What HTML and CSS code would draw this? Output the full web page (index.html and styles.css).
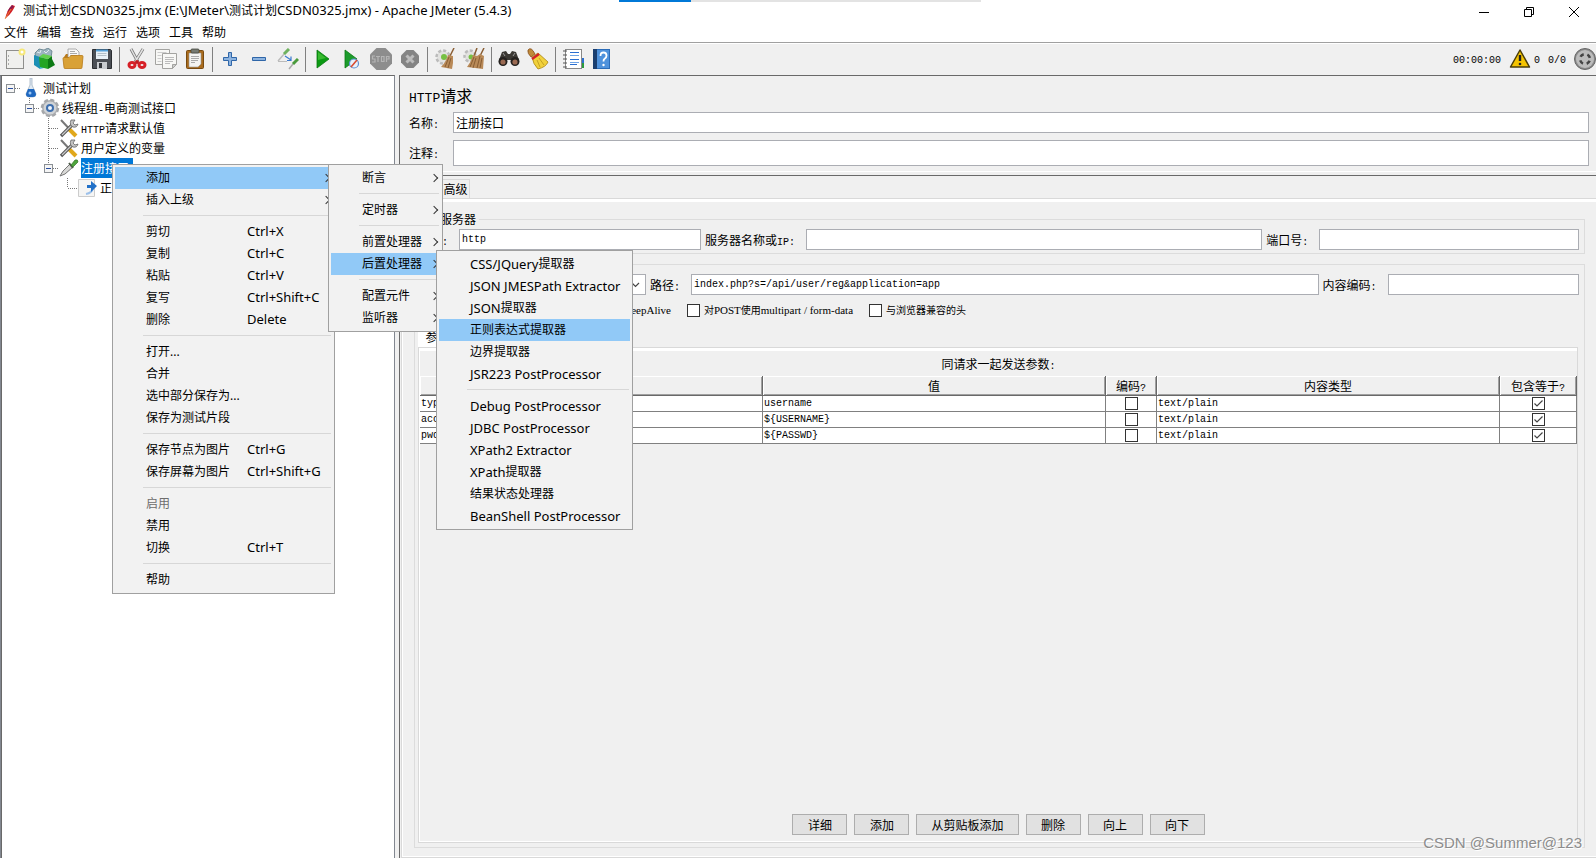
FILE: index.html
```html
<!DOCTYPE html>
<html lang="zh-CN">
<head>
<meta charset="utf-8">
<title>测试计划CSDN0325.jmx - Apache JMeter (5.4.3)</title>
<link rel="stylesheet" href="styles.css">
</head>
<body>
<div class="loader"><span class="loader-bar"></span></div>
<header class="titlebar">
  <svg class="app-icon" viewBox="0 0 16 16"><path d="M3 15 Q5 6 10 1 L13 2 Q10 9 5 13Z" fill="#d22128"/><path d="M5 8 Q7 4 10 1 L12 3 Q9 5 5 8Z" fill="#8a1a4f"/><path d="M3 15 L9 5" stroke="#f0a03a" stroke-width=".7"/></svg>
  <h1 class="title">测试计划<span class="lat">CSDN0325.jmx (E:\JMeter\</span>测试计划<span class="lat">CSDN0325.jmx) - Apache JMeter (5.4.3)</span></h1>
  <div class="window-buttons">
    <button aria-label="最小化"><svg viewBox="0 0 12 12"><path d="M1 6.5h10" stroke="#000"/></svg></button>
    <button aria-label="还原"><svg viewBox="0 0 12 12" fill="none" stroke="#000"><path d="M1.500 3.500h7v7h-7zM3.500 3.500v-2h7v7h-2"/></svg></button>
    <button aria-label="关闭"><svg viewBox="0 0 12 12"><path d="M1 1l10 10M11 1L1 11" stroke="#000"/></svg></button>
  </div>
</header>
<nav class="menubar">
  <button>文件</button><button>编辑</button><button>查找</button><button>运行</button><button>选项</button><button>工具</button><button>帮助</button>
</nav>
<div class="toolbar">
  <button aria-label="新建"><svg viewBox="0 0 22 22"><rect x="2.500" y="2.500" width="17" height="18" fill="#f0f0ee" stroke="#8f8f8d"/><path d="M4.500 7v2M4.500 11v2M4.500 15v2" stroke="#aaa"/><circle cx="18" cy="4" r="3.500" fill="#f6e87a"/><circle cx="18" cy="4" r="1.500" fill="#fff"/></svg></button>
  <button aria-label="模板"><svg viewBox="0 0 22 22"><path d="M2 5l4-4 5 1 4-2 4 3-1 7H3z" fill="#9cb4bf" stroke="#5f7b88" stroke-width=".8"/><path d="M4 4l3 1 1-3M11 3l2 2 3-3" stroke="#dfeaf0" fill="none"/><path d="M1 7l6 2v12l-6-4z" fill="#1c8fb5"/><path d="M7 9l4-2v13l-4 1z" fill="#3fb6d8"/><path d="M6 9l9 2v10l-8-2z" fill="#23a523"/><path d="M15 11l4-3v3l3 6-7 4z" fill="#0c7a14"/><path d="M6 9l4-3 9 2-4 3z" fill="#63d04b"/></svg></button>
  <button aria-label="打开"><svg viewBox="0 0 22 22"><path d="M2 9l2-3h3l1 2h10v5H2z" fill="#b9791a"/><path d="M6 10V1h8l3 3v7z" fill="#f8f8f8" stroke="#999" stroke-width=".8"/><path d="M8 3.500h5M8 5.500h7M8 7.500h7" stroke="#aaa"/><path d="M1 10.500q0-1 1-1h5l2-2h11q1 0 1 1l-1 11q0 1-1 1H3q-1 0-1-1z" fill="#d9a136" stroke="#b87a16" stroke-width=".8"/></svg></button>
  <button aria-label="保存"><svg viewBox="0 0 22 22"><path d="M1.500 1.500h18l1 1v18h-19z" fill="#4b4f55" stroke="#2b2d31"/><rect x="5" y="2" width="12" height="9" fill="#e9f1f7"/><path d="M5 2.500h12" stroke="#54a0d8" stroke-width="2"/><path d="M6.500 5.500h9M6.500 7.500h9" stroke="#b4c0c8"/><rect x="6" y="14" width="10" height="7" fill="#c9ccd0"/><rect x="8" y="15" width="3" height="5" fill="#33363b"/></svg></button>
  <span class="sep"></span>
  <button aria-label="剪切"><svg viewBox="0 0 22 22"><path d="M5 1l7 13M17 1L9 14" stroke="#777" stroke-width="3"/><path d="M5 1l7 13M17 1L9 14" stroke="#e2e2e2" stroke-width="1.500"/><ellipse cx="6" cy="17" rx="3" ry="2.500" fill="none" stroke="#d61f26" stroke-width="3"/><ellipse cx="16" cy="17" rx="3" ry="2.500" fill="none" stroke="#d61f26" stroke-width="3"/><circle cx="11" cy="14" r="2" fill="#c21920"/></svg></button>
  <button aria-label="复制"><svg viewBox="0 0 22 22" fill="#f7f7f5" stroke="#a3a3a0"><path d="M.500 1.500h14v15h-14z"/><path d="M2.500 4.500h9M2.500 7.500h4M2.500 10.500h4M2.500 13.500h4" stroke="#ccc"/><path d="M7.500 5.500h14v11l-4 4h-10z"/><path d="M10 9.500h9M10 11.500h9M10 13.500h8M10 15.500h5" stroke="#bbb"/><path d="M21.500 16.500h-4v4z" fill="#ccc"/></svg></button>
  <button aria-label="粘贴"><svg viewBox="0 0 22 22"><rect x="2.500" y="2.500" width="17" height="18" rx="1" fill="#a96b1d" stroke="#784a10"/><path d="M5 5h12v11l-3 3H5z" fill="#f4f4f2" stroke="#999" stroke-width=".6"/><rect x="7" y="1" width="8" height="4" rx="1" fill="#777b72" stroke="#44483f" stroke-width=".8"/><path d="M7 8.500h8M7 10.500h8M7 12.500h7M7 14.500h4" stroke="#aaa"/></svg></button>
  <span class="sep"></span>
  <button aria-label="展开"><svg viewBox="0 0 22 22"><path d="M9.500 4.500h3v5h5v3h-5v5h-3v-5h-5v-3h5z" fill="#8cb3df" stroke="#2f66a8"/></svg></button>
  <button aria-label="折叠"><svg viewBox="0 0 22 22"><path d="M4.500 9.500h13v3h-13z" fill="#8cb3df" stroke="#2f66a8"/></svg></button>
  <button aria-label="切换"><svg viewBox="0 0 22 22"><path d="M1 13l7-8" stroke="#bbb" stroke-width="1.500"/><path d="M7 6l5-5" stroke="#6fb25f" stroke-width="3"/><path d="M12 21l4-5" stroke="#aaa" stroke-width="1.500"/><path d="M16 16l5-5" stroke="#4a9a3c" stroke-width="3"/><path d="M1 13.500h9" stroke="#bbb"/><path d="M8 8l6 4M14 8.500v4h-4" stroke="#3a7ad0" fill="none" stroke-width="1.200"/></svg></button>
  <span class="sep"></span>
  <button aria-label="启动"><svg viewBox="0 0 22 22"><path d="M5 2l12 9-12 9z" fill="#0b9a13" stroke="#0a7a10" stroke-width=".8"/><path d="M6 4l8 6-8 2z" fill="#58d044" opacity=".6"/></svg></button>
  <button aria-label="不停顿启动"><svg viewBox="0 0 22 22"><path d="M4 2l12 9-12 9z" fill="#1c9b2c" stroke="#0a7a10" stroke-width=".8"/><circle cx="13" cy="15.500" r="4.500" fill="#e8f1fb" stroke="#5d8fd0" stroke-width="1.200"/><path d="M10 19l6-7" stroke="#d84a30" stroke-width="1.600"/></svg></button>
  <button aria-label="停止" disabled><svg viewBox="0 0 22 22"><path d="M6.500 0h9L22 6.500v9L15.500 22h-9L0 15.500v-9z" fill="#8d8d8d"/><path d="M5 8H2.500v3H5v3H2M6 8.500h4M8 8v6M11.500 8.500h2.500v5h-2.500zM16.500 14V8.500H19V11h-2" fill="none" stroke="#b5b5b5" stroke-width="1.200"/></svg></button>
  <button aria-label="关闭测试" disabled><svg viewBox="0 0 22 22"><path d="M7.500 2h7L20 7.500v7L14.500 20h-7L2 14.500v-7z" fill="#848484"/><path d="M7.500 7.500l7 7M14.500 7.500l-7 7" stroke="#bcbcbc" stroke-width="3"/></svg></button>
  <span class="sep"></span>
  <button aria-label="清除"><svg viewBox="0 0 22 22"><circle cx="9" cy="9" r="6.500" fill="#e2e2e0" stroke="#bbb" stroke-width="2.500" stroke-dasharray="3 2"/><circle cx="10" cy="9" r="3" fill="#76c043"/><path d="M20 0l-4 8" stroke="#8a5f35" stroke-width="1.500"/><path d="M14 7l5 1v7l-1 6-11-2q5-5 7-12z" fill="#b98a58"/><path d="M15 9l-4 10M17 10l-3 10" stroke="#7b5128" stroke-width=".8"/></svg></button>
  <button aria-label="清除全部"><svg viewBox="0 0 22 22"><circle cx="7" cy="8" r="5.500" fill="#e2e2e0" stroke="#bbb" stroke-width="2.500" stroke-dasharray="3 2"/><circle cx="8" cy="9" r="2.500" fill="#76c043"/><path d="M14 0l-3 8M21 0l-4 8" stroke="#8a5f35" stroke-width="1.500"/><path d="M10 7l4 1 3-2 4 2-1 13-16-2q4-5 6-12z" fill="#b98a58"/><path d="M11 9l-4 10M13 10l-3 10M17 8l-3 12M19 10l-2 10" stroke="#7b5128" stroke-width=".8"/></svg></button>
  <span class="sep"></span>
  <button aria-label="查找"><svg viewBox="0 0 22 22"><path d="M4 4l4-1 2 3h2l2-3 4 1 3 8H1z" fill="#3b3833"/><circle cx="5" cy="13.500" r="4.500" fill="#24211e"/><circle cx="17" cy="13.500" r="4.500" fill="#24211e"/><circle cx="5" cy="14" r="2.600" fill="#9b6a52"/><circle cx="17" cy="14" r="2.600" fill="#9b6a52"/><path d="M5 5l2 3M17 5l-2 3" stroke="#999"/></svg></button>
  <button aria-label="重置搜索"><svg viewBox="0 0 22 22"><path d="M1 2q3-4 7 4l-4 3Q0 5 1 2z" fill="#c08a3a" stroke="#7b4313" stroke-width=".7"/><path d="M5 9l6-4 10 9q-2 5-10 7-5-5-6-12z" fill="#f1d13c" stroke="#a98412" stroke-width=".8"/><path d="M5 11l7-5" stroke="#d2232a" stroke-width="2.500"/><path d="M10 12l3 7M12 10l5 7" stroke="#b9951c" stroke-width=".8"/></svg></button>
  <span class="sep"></span>
  <button aria-label="函数助手"><svg viewBox="0 0 22 22"><rect x="3.500" y="1.500" width="16" height="19" fill="#fff" stroke="#888"/><path d="M1 3h4M1 7h4M1 11h4M1 15h4M1 19h4" stroke="#555" stroke-width="1.200"/><path d="M8 4.500h9M8 11.500h9M8 16.500h7" stroke="#2b6fd0"/><path d="M8 7.500h9M8 14.500h9" stroke="#6fa4e6"/><path d="M20 10h2v5h-2z" fill="#2b6fd0"/><path d="M20 15h2v5h-2z" fill="#2c9a3c"/></svg></button>
  <button aria-label="帮助"><svg viewBox="0 0 22 22"><rect x="2" y="1" width="17" height="20" fill="#2b6cb8"/><rect x="2" y="1" width="4" height="20" fill="#1b3f70"/><rect x="6" y="2" width="12" height="18" fill="#4f92dc"/><path d="M9.500 8q0-3.500 3-3.500t3 3q0 2-1.600 3T12.500 13.500" fill="none" stroke="#fff" stroke-width="1.800"/><circle cx="12.500" cy="17" r="1.200" fill="#fff"/></svg></button>
  <div class="status">
    <span class="clock">00:00:00</span>
    <button class="warn" aria-label="日志"><svg viewBox="0 0 22 22"><path d="M11 2l9.500 17h-19z" fill="#f5c400" stroke="#4a3d08" stroke-width="1.500" stroke-linejoin="round"/><path d="M11 7v6" stroke="#222" stroke-width="2.400"/><circle cx="11" cy="16" r="1.300" fill="#222"/></svg></button>
    <span>0</span><span class="threads">0/0</span>
    <svg class="engine" viewBox="0 0 22 22"><circle cx="11" cy="11" r="10.500" fill="#8b8b8b" stroke="#666"/><circle cx="11" cy="11" r="9" fill="#bcbcbc"/><circle cx="11" cy="11" r="5" fill="none" stroke="#444" stroke-width="2.500" stroke-dasharray="4 3.850" stroke-dashoffset="-1.900"/></svg>
  </div>
</div>

<main class="workspace">
  <aside class="tree">
    <div class="node"><svg class="cell" viewBox="0 0 19 20"><use href="#knob"/></svg>
      <svg class="icon" viewBox="0 0 22 20"><path d="M10 0h2v7l4 9q0 3-3 3H9q-3 0-3-3l4-9z" fill="#dfe9f2" stroke="#9ab" stroke-width=".7"/><path d="M8 11h6l2 5q0 3-3 3H9q-3 0-3-3z" fill="#1f68c0"/><circle cx="10" cy="15" r="1.500" fill="#9cc8f5"/></svg><span class="name">测试计划</span></div>
    <div class="node"><span class="cell"></span><svg class="cell" viewBox="0 0 19 20"><path class="dots" d="M9.500 0v6"/><use href="#knob"/></svg>
      <svg class="icon" viewBox="0 0 22 20"><circle cx="11" cy="10" r="8" fill="#bfc1c4" stroke="#a5a7aa" stroke-width="2.500" stroke-dasharray="4 2.280"/><circle cx="11" cy="10" r="7" fill="#d0d3d6" stroke="#a0a2a5" stroke-width=".8"/><circle cx="11" cy="10" r="4" fill="#3e6fae"/><circle cx="11" cy="10" r="2" fill="#eef3f8"/></svg><span class="name">线程组<span class="en">-</span>电商测试接口</span></div>
    <div class="node"><span class="cell"></span><span class="cell"></span><svg class="cell" viewBox="0 0 19 20"><path class="dots" d="M9.500 0v20M10 10.500h9"/></svg>
      <svg class="icon" viewBox="0 0 22 20"><use href="#tools"/></svg><span class="name"><span class="en">HTTP</span>请求默认值</span></div>
    <div class="node"><span class="cell"></span><span class="cell"></span><svg class="cell" viewBox="0 0 19 20"><path class="dots" d="M9.500 0v20M10 10.500h9"/></svg>
      <svg class="icon" viewBox="0 0 22 20"><use href="#tools"/></svg><span class="name">用户定义的变量</span></div>
    <div class="node"><span class="cell"></span><span class="cell"></span><svg class="cell" viewBox="0 0 19 20"><path class="dots" d="M9.500 0v6"/><use href="#knob"/></svg>
      <svg class="icon" viewBox="0 0 22 20"><path d="M2 18l3-5 7-7 3 3-8 7z" fill="#d8d8d6" stroke="#777" stroke-width="1"/><path d="M11 5l4 5" stroke="#4c5a48" stroke-width="2"/><path d="M13 7l4-5q3-1 3 2l-5 5z" fill="#4fa53c" stroke="#35762a" stroke-width=".7"/></svg><span class="name selected">注册接口</span></div>
    <div class="node"><span class="cell"></span><span class="cell"></span><span class="cell"></span><svg class="cell" viewBox="0 0 19 20"><path class="dots" d="M9.500 0v10M10 10.500h9"/></svg>
      <svg class="icon" viewBox="0 0 22 20"><path d="M1.500 1.500h16v17h-16z" fill="#f5f5f4" stroke="#ccc"/><path d="M9 16q6-1 7-6" stroke="#9cc0ea" stroke-width="2" fill="none"/><path d="M10 7h4V3l6 5-6 6v-4h-4z" fill="#2271c8"/></svg><span class="name">正则表达式提取器</span></div>
    <svg class="defs" width="0" height="0"><defs>
      <g id="knob"><path class="dots" d="M14 10.500h5"/><rect x="5.500" y="6.500" width="8" height="8" fill="#f5f5f5" stroke="#8a8f94"/><path d="M7 10.500h5" stroke="#2a4fa0"/></g>
      <g id="tools"><path d="M3 2l14 15" stroke="#777" stroke-width="2"/><path d="M11 11l7 7" stroke="#e0a81c" stroke-width="4"/><path d="M3 18L14 7" stroke="#555" stroke-width="3.200"/><path d="M4 17L14 7" stroke="#c9c9c9" stroke-width="1.200"/><path d="M13 2q-2 5 2 7 4 1 5-3l-3 1-2-2 2-3z" fill="#c4c4c4" stroke="#666" stroke-width=".8"/></g>
    </defs></svg>
  </aside>
  <div class="splitter"></div>
  <section class="editor">
    <div class="head">
      <h2><span class="en">HTTP</span>请求</h2>
      <div class="row"><label class="lead" for="f-name">名称<span class="en">:</span></label><input class="field cjk" id="f-name" value="注册接口"></div>
      <div class="row"><label class="lead" for="f-note">注释<span class="en">:</span></label><input class="field tall" id="f-note"></div>
    </div>
    <div class="tabs"><button class="tab on">基本</button><button class="tab">高级</button></div>
    <div class="panel">
      <fieldset class="group">
        <legend><span class="en">Web</span>服务器</legend>
        <div class="row server">
          <label for="f-proto">协议<span class="en">:</span></label><input class="field" id="f-proto" value="http">
          <label for="f-host">服务器名称或<span class="en">IP:</span></label><input class="field" id="f-host">
          <label for="f-port">端口号<span class="en">:</span></label><input class="field" id="f-port">
        </div>
      </fieldset>
      <fieldset class="group fill">
        <legend><span class="en">HTTP</span>请求</legend>
        <div class="row request">
          <select class="field" aria-label="方法"><option>POST</option></select>
          <label for="f-path">路径<span class="en">:</span></label><input class="field" id="f-path" value="index.php?s=/api/user/reg&amp;application=app">
          <label for="f-enc">内容编码<span class="en">:</span></label><input class="field" id="f-enc">
        </div>
        <div class="checks">
          <label><input type="checkbox">自动重定向</label>
          <label><input type="checkbox" checked>跟随重定向</label>
          <label><input type="checkbox" checked><span>使用 <span class="serif">KeepAlive</span></span></label>
          <label><input type="checkbox"><span>对<span class="serif">POST</span>使用<span class="serif">multipart / form-data</span></span></label>
          <label><input type="checkbox">与浏览器兼容的头</label>
        </div>
        <div class="tabs inner"><button class="tab on">参数</button></div>
        <div class="params">
          <h3>同请求一起发送参数<span class="en">:</span></h3>
          <table>
            <colgroup><col><col><col class="c-enc"><col><col class="c-eq"></colgroup>
            <thead><tr><th>名称<span class="en">:</span></th><th>值</th><th>编码<span class="en">?</span></th><th>内容类型</th><th>包含等于<span class="en">?</span></th></tr></thead>
            <tbody>
              <tr><td>type</td><td>username</td><td class="mid"><input type="checkbox" aria-label="编码"></td><td>text/plain</td><td class="mid"><input type="checkbox" checked aria-label="包含等于"></td></tr>
              <tr><td>account</td><td>${USERNAME}</td><td class="mid"><input type="checkbox" aria-label="编码"></td><td>text/plain</td><td class="mid"><input type="checkbox" checked aria-label="包含等于"></td></tr>
              <tr><td>pwd</td><td>${PASSWD}</td><td class="mid"><input type="checkbox" aria-label="编码"></td><td>text/plain</td><td class="mid"><input type="checkbox" checked aria-label="包含等于"></td></tr>
            </tbody>
          </table>
          <div class="actions"><button>详细</button><button>添加</button><button>从剪贴板添加</button><button>删除</button><button>向上</button><button>向下</button></div>
        </div>
      </fieldset>
    </div>
  </section>
</main>

<div class="menu menu-node" role="menu">
  <button class="hot sub">添加</button><button class="sub">插入上级</button><hr>
  <button>剪切<kbd>Ctrl+X</kbd></button><button>复制<kbd>Ctrl+C</kbd></button><button>粘贴<kbd>Ctrl+V</kbd></button><button>复写<kbd>Ctrl+Shift+C</kbd></button><button>删除<kbd>Delete</kbd></button><hr>
  <button>打开...</button><button>合并</button><button>选中部分保存为...</button><button>保存为测试片段</button><hr>
  <button>保存节点为图片<kbd>Ctrl+G</kbd></button><button>保存屏幕为图片<kbd>Ctrl+Shift+G</kbd></button><hr>
  <button disabled>启用</button><button>禁用</button><button>切换<kbd>Ctrl+T</kbd></button><hr>
  <button>帮助</button>
</div>
<div class="menu menu-add" role="menu">
  <button class="sub">断言</button><hr><button class="sub">定时器</button><hr><button class="sub">前置处理器</button><button class="hot sub">后置处理器</button><hr><button class="sub">配置元件</button><button class="sub">监听器</button>
</div>
<div class="menu menu-post" role="menu">
  <button><span class="lat">CSS/JQuery</span>提取器</button><button><span class="lat">JSON JMESPath Extractor</span></button><button><span class="lat">JSON</span>提取器</button><button class="hot">正则表达式提取器</button><button>边界提取器</button><button><span class="lat">JSR223 PostProcessor</span></button><hr>
  <button><span class="lat">Debug PostProcessor</span></button><button><span class="lat">JDBC PostProcessor</span></button><button><span class="lat">XPath2 Extractor</span></button><button><span class="lat">XPath</span>提取器</button><button>结果状态处理器</button><button><span class="lat">BeanShell PostProcessor</span></button>
</div>
<div class="watermark">CSDN @Summer@123</div>
</body>
</html>
```
FILE: styles.css
```css
* { box-sizing: border-box; }
:root {
  --ui: "Noto Sans", "Noto Sans CJK SC", sans-serif;
  --song: "Noto Sans CJK SC", sans-serif;
  --mono: "Liberation Mono", "Noto Sans CJK SC", monospace;
}
body {
  margin: 0;
  height: 100vh;
  display: flex;
  flex-direction: column;
  overflow: hidden;
  background: #fff;
  color: #000;
  font: 12px/16px var(--ui);
}
button, input, select { font: inherit; color: inherit; margin: 0; }
button { border: 0; padding: 0; background: none; }
h1, h2, h3 { margin: 0; font-weight: 400; }

/* Title bar */
.loader {
  position: absolute;
  top: 0;
  left: 619px;
  width: 362px;
  height: 2px;
  background: #e3e3e3;
}
.loader-bar { display: block; width: 72px; height: 2px; background: #0078d7; }
.titlebar { display: flex; align-items: center; height: 24px; padding-left: 2px; }
.app-icon { width: 16px; height: 18px; margin-right: 5px; }
.title { font-size: 12px; line-height: 22px; padding-bottom: 2px; }
.lat { font-size: 13px; line-height: 1; }
.window-buttons { display: flex; margin-left: auto; height: 20px; }
.window-buttons button { width: 45px; }
.window-buttons svg { width: 12px; height: 12px; display: block; margin: auto; }
.menubar { display: flex; gap: 9px; height: 18px; padding-left: 4px; }
.menubar button { line-height: 18px; }

/* Toolbar */
.toolbar {
  display: flex;
  align-items: center;
  height: 33px;
  background: #f0f0f0;
  border-top: 1px solid #a0a0a0;
  box-shadow: inset 0 1px #fff;
}
.toolbar button { width: 29px; height: 24px; }
.toolbar svg { display: block; width: 22px; height: 22px; margin: auto; }
.sep { width: 6px; height: 25px; background: linear-gradient(#808080, #808080) 3px 0 / 1px 100% no-repeat; }
.status { display: flex; align-items: center; margin-left: auto; font: 10px/16px var(--mono); }
.status > span { padding-top: 3px; }
.status .warn { width: 22px; margin: 0 3px 0 8px; }
.threads { margin: 0 8px; }

/* Workspace */
.workspace { flex: 1; display: flex; min-height: 0; }
.tree {
  width: 395px;
  flex: none;
  padding-top: 2px;
  border: 1px solid #828790;
  border-top-color: #696969;
  border-bottom: 0;
  box-shadow: inset 1px 0 #696969;
  font-family: var(--song);
}
.splitter { width: 4px; background: #f0f0f0; }
.node { display: flex; align-items: center; height: 20px; }
.cell { width: 19px; height: 20px; flex: none; }
.icon { width: 22px; height: 20px; margin-right: 1px; }
.name { line-height: 20px; white-space: nowrap; }
.selected { background: #0078d7; color: #fff; padding-right: 4px; }
.dots { stroke: #777; stroke-dasharray: 1 1; fill: none; }
.defs { display: block; }
.en { font-family: var(--mono); font-size: 10px; line-height: 1; }

.editor {
  flex: 1;
  min-width: 0;
  display: flex;
  flex-direction: column;
  background: #f0f0f0;
  border-left: 1px solid #696969;
  border-top: 1px solid #696969;
  font-family: var(--song);
}
.head {
  display: flex;
  flex-direction: column;
  gap: 7px;
  padding: 9px 7px 9px 9px;
  border-bottom: 1px solid #696969;
  background: linear-gradient(#fff, #fff) 0 calc(100% - 3px) / 100% 1px no-repeat;
}
.head h2 { font-size: 16px; line-height: 20px; height: 20px; }
.head h2 .en { font-size: 13px; }
.row { display: flex; align-items: center; }
.row label { flex: none; white-space: nowrap; }
.row .lead { width: 44px; }
.field {
  flex: 1;
  min-width: 0;
  height: 21px;
  padding: 0 2px;
  border: 1px solid #abadb3;
  border-radius: 0;
  background: #fff;
  font: 10px/19px var(--mono);
}
.cjk { font: 12px/19px var(--song); }
.tall { height: 26px; }

.tabs { display: flex; align-items: flex-end; height: 22px; padding-left: 2px; }
.tab {
  height: 19px;
  padding: 0 1px;
  width: 29px;
  border: 1px solid #d9d9d9;
  border-bottom: 0;
  line-height: 18px;
}
.tab.on { width: 39px; height: 21px; background: #fff; }
.panel {
  flex: 1;
  min-height: 0;
  display: flex;
  flex-direction: column;
  gap: 2px;
  margin-left: 1px;
  padding: 12px 11px 9px 12px;
  border: 1px solid #d9d9d9;
  border-right: 0;
  box-shadow: inset 0 3px #fff, inset 1px -1px #fff;
}
.group {
  margin: 0;
  min-width: 0;
  padding: 2px 5px 3px 3px;
  border: 1px solid #dcdcdc;
}
.group legend { margin-left: 1px; padding: 2px 3px 0; line-height: 12px; }
.fill { flex: 1; min-height: 0; display: flex; flex-direction: column; padding-bottom: 4px; }
.server label, .request label { margin: 0 11px 0 4px; }
.server label:first-child { margin-left: 0; }
#f-proto { flex: 240; }
#f-host { flex: 458; }
#f-port { flex: 258; }
.request select { flex: 0 0 228px; }
#f-path { flex: 630; }
#f-enc { flex: 188; }
select.field {
  appearance: none;
  background: #fff url("data:image/svg+xml,%3Csvg xmlns='http://www.w3.org/2000/svg' width='9' height='6' viewBox='0 0 9 6'%3E%3Cpath d='M1 1L4.500 4.500L8 1' fill='none' stroke='%23444' stroke-width='1.200'/%3E%3C/svg%3E") right 5px center no-repeat;
}
input[type="checkbox"] {
  appearance: none;
  flex: none;
  width: 13px;
  height: 13px;
  border: 1px solid #333;
  background: #fff;
}
input[type="checkbox"]:checked {
  background: #fff url("data:image/svg+xml,%3Csvg xmlns='http://www.w3.org/2000/svg' viewBox='0 0 11 11'%3E%3Cpath d='M1.500 5.500L4 8L9.500 2.500' fill='none' stroke='%23444' stroke-width='1.200'/%3E%3C/svg%3E");
}
.checks {
  display: flex;
  gap: 16px;
  height: 20px;
  margin-top: 5px;
  font-size: 10px;
  line-height: 20px;
}
.checks label { display: flex; align-items: center; gap: 4px; white-space: nowrap; }
.serif { font-family: "Liberation Serif", serif; font-size: 11px; line-height: 1; }
.inner { margin-top: 5px; padding-left: 0; }
.inner .tab.on { padding: 0 3px; border-color: #fff; }
.params {
  flex: 1;
  min-height: 0;
  display: flex;
  flex-direction: column;
  margin-right: 1px;
  padding: 8px 0 7px 1px;
  border: 1px solid #d9d9d9;
  box-shadow: inset 0 3px #fff, inset 1px -1px #fff;
}
.params h3 { font-size: 12px; line-height: 16px; text-align: center; margin-bottom: 4px; }
table { width: 100%; table-layout: fixed; border-collapse: separate; border-spacing: 0; background: #fff; }
.c-enc { width: 51px; }
.c-eq { width: 77px; }
th {
  height: 20px;
  padding: 0;
  border-right: 1px solid #696969;
  border-bottom: 1px solid #696969;
  background: #f0f0f0;
  box-shadow: inset 1px 1px #fff, inset -1px -1px #a0a0a0;
  font-weight: 400;
  line-height: 18px;
}
td {
  height: 16px;
  padding: 0 0 0 1px;
  border-right: 1px solid #808080;
  border-bottom: 1px solid #808080;
  font: 10px/15px var(--mono);
}
.mid { padding: 0; text-align: center; }
.mid input { display: block; margin: 0 auto; }
.actions { display: flex; justify-content: center; gap: 7px; margin-top: auto; }
.actions button {
  height: 21px;
  min-width: 55px;
  padding: 0 14px;
  border: 1px solid #adadad;
  background: #e1e1e1;
  line-height: 19px;
}

/* Popup menus */
.menu {
  position: absolute;
  display: flex;
  flex-direction: column;
  padding: 2px;
  border: 1px solid #a0a0a0;
  background: #f2f2f2;
}
.menu button {
  display: flex;
  align-items: center;
  height: 22px;
  padding-left: 31px;
  line-height: 22px;
  text-align: left;
  white-space: nowrap;
}
.menu .lat { line-height: 20px; }
.menu hr { width: auto; height: 1px; margin: 4px 1px 5px 28px; border: 0; background: #d7d7d7; align-self: stretch; }
.menu .hot { background: #91c9f7; }
.menu button:disabled { color: #6d6d6d; }
.menu kbd { position: absolute; left: 134px; padding-bottom: 2px; font: 13px/20px var(--ui); }
.menu-post button { padding-bottom: 1px; }
.sub::after {
  content: "";
  width: 5px;
  height: 5px;
  margin: 0 3px 0 auto;
  border: solid #333;
  border-width: 1px 1px 0 0;
  transform: rotate(45deg);
}
.menu-node { left: 112px; top: 164px; width: 223px; }
.menu-add { left: 328px; top: 164px; width: 115px; }
.menu-post { left: 436px; top: 250px; width: 197px; }
.watermark {
  position: absolute;
  right: 14px;
  bottom: 4px;
  font: 15px/22px "Liberation Sans", sans-serif;
  color: #8c8c8c;
  text-shadow: 1px 1px #fff;
}
```
